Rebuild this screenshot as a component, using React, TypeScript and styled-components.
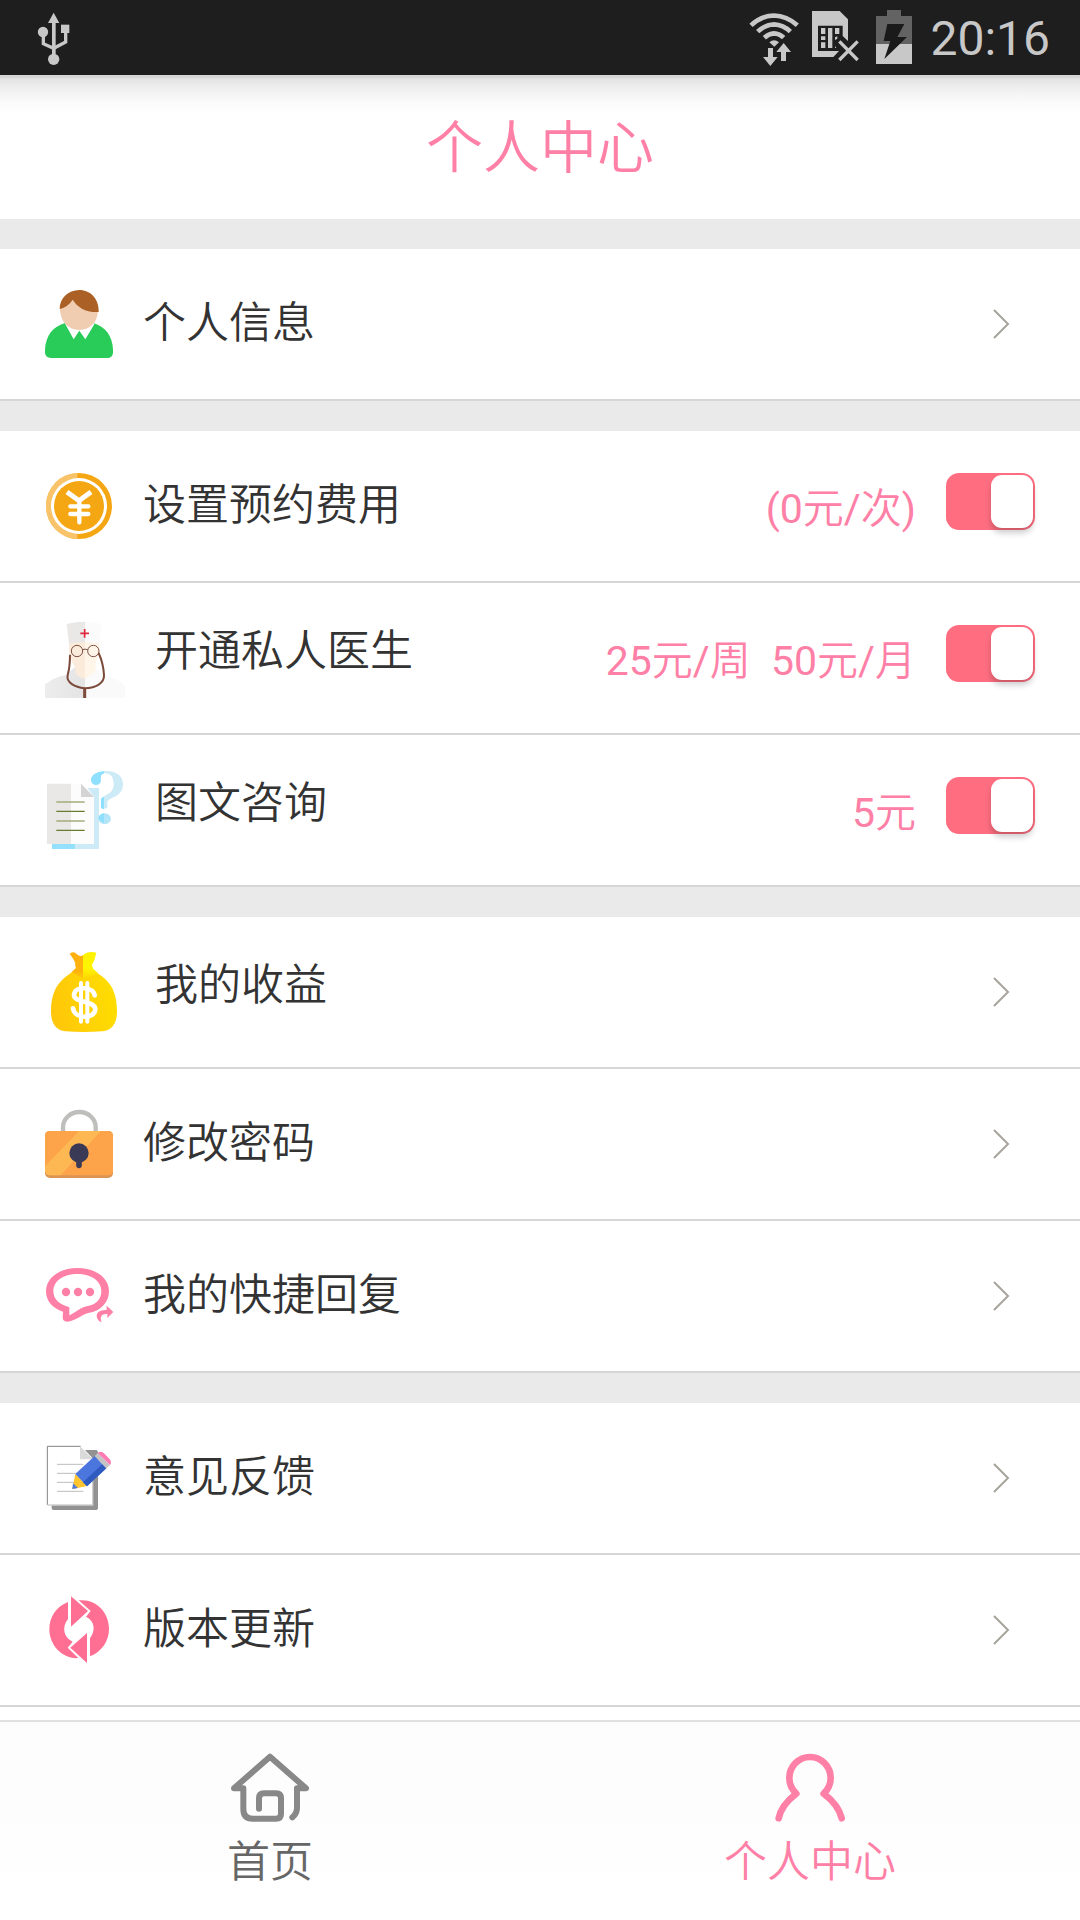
import React, { useState } from 'react';
import styled, { createGlobalStyle } from 'styled-components';

const PINK = '#ff80a6';
const LINE = '#d6d6d6';

const GlobalStyle = createGlobalStyle`
  *, *::before, *::after { box-sizing: border-box; }
  body {
    margin: 0;
    background: #ffffff;
    color: #333333;
    font-family: Roboto, "Noto Sans CJK SC DemiLight", "Noto Sans CJK SC", sans-serif;
    font-weight: 400;
  }
`;

const Page = styled.div`
  display: flex;
  flex-direction: column;
  min-height: 100vh;
`;

const StatusBar = styled.div`
  display: flex;
  align-items: center;
  gap: 12px;
  height: 75px;
  padding: 0 30px 0 37px;
  background: #1e1e1e;
  color: #c8c8c8;
`;

const Spacer = styled.div`
  flex: 1;
`;

const Clock = styled.time`
  padding: 2px 0 0 2px;
  font-size: 48px;
  line-height: 56px;
`;

const Glyph = styled.svg<{ $w: number; $h: number }>`
  display: block;
  flex: none;
  width: ${(p) => p.$w}px;
  height: ${(p) => p.$h}px;
  overflow: visible;
`;

const Header = styled.header`
  display: flex;
  align-items: center;
  justify-content: center;
  height: 144px;
  padding-top: 4px;
  background: linear-gradient(#d6d6d6 0 3px, #e2e2e2 3px, #f0f0f0 14px, #fafafa 27px, #ffffff 38px);
`;

const Title = styled.h1`
  margin: 0;
  font-size: 57px;
  line-height: 80px;
  font-weight: 400;
  color: ${PINK};
`;

const Main = styled.main`
  flex: 1;
  padding-bottom: 13px;
`;

const Group = styled.section`
  border-top: 30px solid #eaeaea;
`;

const Row = styled.div`
  display: flex;
  align-items: center;
  gap: 30px;
  height: 152px;
  padding: 0 45px;
  border-bottom: 2px solid ${LINE};
`;

const LinkRow = styled(Row).attrs({ as: 'a' })<{ href: string }>`
  color: inherit;
  text-decoration: none;
`;

const Caption = styled.div`
  display: flex;
  flex: 1;
  align-items: flex-start;
  gap: 30px;
`;

const Label = styled.span`
  font-size: 43px;
  line-height: 66px;
`;

const Price = styled.span`
  padding-top: 6px;
  font-size: 41px;
  line-height: 56px;
  color: ${PINK};
  white-space: pre;
`;

const SwitchSlot = styled.span`
  display: flex;
  padding-bottom: 9px;
`;

const Switch = styled.input`
  appearance: none;
  display: flex;
  justify-content: flex-start;
  width: 89px;
  height: 57px;
  margin: 0;
  padding: 2px;
  border-radius: 13px;
  background: #d0d0d0;
  cursor: pointer;

  &::before {
    content: '';
    width: 42px;
    height: 53px;
    border-radius: 11px;
    background: #ffffff;
    box-shadow: 0 5px 6px rgba(0, 0, 0, 0.2);
  }

  &:checked {
    justify-content: flex-end;
    background: #ff6e80;
  }
`;

const TabBar = styled.nav`
  position: sticky;
  bottom: 0;
  display: flex;
  height: 200px;
  border-top: 2px solid #e0e0e0;
  background: linear-gradient(#fcfcfc, #ffffff);
`;

const Tab = styled.a<{ $active?: boolean }>`
  display: flex;
  flex: 1;
  flex-direction: column;
  align-items: center;
  gap: 7px;
  padding-top: 31px;
  color: ${(p) => (p.$active ? PINK : '#666666')};
  text-decoration: none;
`;

const UsbIcon = () => (
  <Glyph $w={34} $h={55} viewBox="111 30 102 165" aria-hidden="true">
    <g fill="#c8c8c8">
      <path d="M161 38 178 69H167V180H156V69H144Z" />
      <circle cx="129" cy="96" r="15.500" />
      <rect x="183" y="74" width="25" height="25" />
      <circle cx="161" cy="178" r="17" />
    </g>
    <path d="M130 100V131L161 145L197 126V92" fill="none" stroke="#c8c8c8" strokeWidth="10" />
  </Glyph>
);

const WifiIcon = () => (
  <Glyph $w={51} $h={55} viewBox="87 30 153 165" aria-hidden="true">
    <g fill="none" stroke="#c8c8c8" strokeWidth="14">
      <path d="M93 76Q124 47 162 46.500Q200 47 232 76" />
      <path d="M113 95Q135 74 162 73Q190 74 211 95" />
      <path d="M133 113Q146 101 162 100Q179 101 191 113" />
    </g>
    <g fill="#c8c8c8">
      <path d="M148 127Q162 115 177 127L163 140Z" />
      <path d="M144 144H159V171H173L151 198L129 171H144Z" />
      <path d="M191 129 213 156H198V183H183V156H169Z" />
    </g>
  </Glyph>
);

const SimIcon = () => (
  <Glyph $w={52} $h={55} viewBox="276 30 156 165" aria-hidden="true">
    <path d="M276 33H359L384 58V123L368 108V77H294V153H357L340 171H276Z" fill="#c8c8c8" />
    <g fill="#c8c8c8">
      <path d="M303 84H316V102H303ZM303 109H316V120H303ZM303 127H316V144H303Z" />
      <path d="M324 84H337V144H324ZM345 84H358V102H345Z" />
      <path d="M345 112L352 109V116L345 120ZM345 138L349 144H345Z" />
    </g>
    <path d="M358 124 413 180M413 124 358 180" stroke="#c8c8c8" strokeWidth="10" />
  </Glyph>
);

const BatteryIcon = () => (
  <Glyph $w={40} $h={55} viewBox="468 30 120 165" aria-hidden="true">
    <path d="M501 30H543V48H576V132H468V48H501Z" fill="#636363" />
    <path d="M468 132H576V192H468Z" fill="#c8c8c8" />
    <path d="M502 72H553L532 111H561L493 177L511 123H491Z" fill="#1a1a1a" />
  </Glyph>
);

const PersonIcon = () => (
  <Glyph $w={68} $h={68} viewBox="135 870 204 204" aria-hidden="true">
    <path d="M195 969Q138 987 135 1049V1058Q136 1072 153 1074H322Q338 1073 339 1058V1049Q336 987 280 969Z" fill="#29cb59" />
    <path d="M194 969Q237 1000 280 969L283 973L256 1018L238 992L221 1018Z" fill="#ffffff" />
    <path d="M180 925C180 965 205 990 238 990S294 965 294 930L270 890H215Z" fill="#f0cdb0" />
    <path d="M179 927C179 895 204 870 238 870C272 870 298 898 296 936C258 938 232 922 218 899Q204 921 179 927Z" fill="#ab6125" />
  </Glyph>
);

const CoinIcon = () => (
  <Glyph $w={68} $h={68} viewBox="135 126 204 204" aria-hidden="true">
    <circle cx="237" cy="228" r="99" fill="#f5a713" />
    <path d="M232 129A94 99 0 0 0 232 327Z" fill="#f9c469" />
    <circle cx="237" cy="228" r="84" fill="#ffffff" />
    <circle cx="237" cy="228" r="75" fill="#f5a713" />
    <path d="M201 186 237 212 273 186" fill="none" stroke="#ffffff" strokeWidth="15" />
    <path d="M211 229H265M211 252H265M238 214V277" fill="none" stroke="#ffffff" strokeWidth="13" strokeLinecap="round" />
  </Glyph>
);

const DoctorIcon = () => (
  <Glyph $w={80} $h={80} viewBox="135 564 240 240" aria-hidden="true">
    <defs>
      <linearGradient id="coatLeft" x1="0" x2="1">
        <stop offset="0" stopColor="#ededed" />
        <stop offset="1" stopColor="#e4e4e4" />
      </linearGradient>
    </defs>
    <path d="M135 763Q160 742 200 734L228 708L255 745V804H135Z" fill="url(#coatLeft)" />
    <path d="M255 745L284 712L312 736Q350 744 375 767V804H255Z" fill="#fafafa" />
    <path d="M207 636H255V747Q236 743 226 728V713Q212 692 207 660Z" fill="#fbebdb" />
    <path d="M255 636H299Q300 665 287 700Q290 724 278 733Q264 738 255 747Z" fill="#fff6e9" />
    <path d="M200 582Q225 575 255 575V636Q230 636 207 641Z" fill="#e9e8e7" />
    <path d="M255 575Q280 575 303 581L299 640Q275 636 255 636Z" fill="#fbfbfb" />
    <path d="M241 610H267M254 597V623" stroke="#e0283f" strokeWidth="5" />
    <g fill="none" stroke="#7c5144" strokeWidth="3">
      <circle cx="231" cy="663" r="17" />
      <circle cx="280" cy="663" r="17" />
      <path d="M248 659Q255 656 263 659" />
    </g>
    <path d="M210 674Q210 710 203 735C198 758 225 772 254 775C288 773 313 760 312 735Q310 700 296 669" fill="none" stroke="#7c4a3a" strokeWidth="6" />
    <path d="M254 776V804" stroke="#7c4a3a" strokeWidth="9" />
  </Glyph>
);

const ConsultIcon = () => (
  <Glyph $w={80} $h={80} viewBox="135 1020 240 240" aria-hidden="true">
    <path d="M262 1074H297V1257H225V1242H282V1100Z" fill="#cdebf6" />
    <path d="M156 1242H225V1257H156Z" fill="#95e0fd" />
    <path d="M141 1061H213V1242H141Z" fill="#e9e8e7" />
    <path d="M213 1061H243L282 1100V1242H213Z" fill="#fcfcfc" />
    <path d="M243 1061 282 1101H243Z" fill="#d4d4d4" />
    <path d="M169 1116H254M169 1173H254" stroke="#a3ad7c" strokeWidth="5" />
    <path d="M169 1144H254M169 1201H254" stroke="#687b30" strokeWidth="4" />
    <path d="M312 1023C350 1021 369 1038 369 1064C368 1102 327 1100 322 1116V1134Q312 1139 303 1134V1113C305 1090 340 1100 341 1062C341 1036 327 1029 312 1030Z" fill="#cdebf6" />
    <path d="M312 1023C288 1025 273 1036 273 1050C274 1069 300 1070 303 1053C302 1041 301 1033 312 1031ZM303 1106Q306 1102 312 1100V1137Q306 1137 303 1134Z" fill="#8ee0fe" />
    <ellipse cx="314" cy="1166" rx="19" ry="16" fill="#b4e4f7" />
    <path d="M312 1150A19 16 0 0 0 295 1166L312 1180Z" fill="#8ee0fe" />
  </Glyph>
);

const MoneyIcon = () => (
  <Glyph $w={80} $h={80} viewBox="135 156 240 240" aria-hidden="true">
    <defs>
      <linearGradient id="bagBody" x1="0" y1="0.6" x2="1" y2="0.4">
        <stop offset="0" stopColor="#ffc60a" />
        <stop offset="1" stopColor="#ffde00" />
      </linearGradient>
      <linearGradient id="bagLeft" x1="0" y1="0" x2="0" y2="1">
        <stop offset="0" stopColor="#ffb010" />
        <stop offset="0.7" stopColor="#ffb10d" />
        <stop offset="1" stopColor="#ffcb08" />
      </linearGradient>
      <linearGradient id="bagRight" x1="0" y1="0" x2="0" y2="1">
        <stop offset="0" stopColor="#fff200" />
        <stop offset="0.6" stopColor="#fff500" />
        <stop offset="1" stopColor="#ffd802" />
      </linearGradient>
    </defs>
    <path d="M226 206H278C294 228 350 236 351 330C352 370 336 391 308 394Q252 398 196 394C168 391 152 370 153 330C155 236 212 228 226 206Z" fill="url(#bagBody)" />
    <path d="M209 161Q222 152 230 162Q239 171 249 166V236L215 216L228 204L225 195Q230 189 209 161Z" fill="url(#bagLeft)" />
    <path d="M249 166Q264 152 289 158Q285 180 276 195L279 206L295 220L249 236Z" fill="url(#bagRight)" />
    <path d="M284 286C280 260 226 256 222 284C220 310 286 300 286 328C284 358 224 358 219 325" fill="none" stroke="#ffffff" strokeWidth="14" strokeLinecap="round" />
    <path d="M243 249V365M262 249V365" stroke="#ffffff" strokeWidth="12" strokeLinecap="round" />
  </Glyph>
);

const LockIcon = () => (
  <Glyph $w={68} $h={68} viewBox="135 630 204 204" aria-hidden="true">
    <path d="M189 696V682A49 46 0 0 1 287 682V696" fill="none" stroke="#bebebd" strokeWidth="13" />
    <rect x="135" y="693" width="204" height="141" rx="15" fill="#db9452" />
    <rect x="135" y="693" width="204" height="133" rx="13" fill="#fda349" />
    <path d="M237 693H303L182 826H148Q135 824 135 810V799Z" fill="#fdb853" />
    <circle cx="237" cy="759" r="29" fill="#3b3a56" />
    <path d="M237 770V796" stroke="#3b3a56" strokeWidth="17" strokeLinecap="round" />
  </Glyph>
);

const ReplyIcon = () => (
  <Glyph $w={68} $h={68} viewBox="135 1086 204 204" aria-hidden="true">
    <path
      fillRule="evenodd"
      fill={PINK}
      d="M232 1104C286 1104 327 1133 327 1173C327 1207 302 1234 265 1239C246 1243 229 1262 203 1265Q188 1266 188 1252L189 1235C157 1225 138 1202 138 1174C138 1134 178 1104 232 1104ZM232 1122C190 1122 160 1143 160 1174C160 1200 180 1213 208 1222V1246C226 1238 238 1224 260 1219C288 1214 304 1198 304 1173C304 1143 274 1122 232 1122Z"
    />
    <g fill={PINK}>
      <circle cx="198" cy="1176" r="12.500" />
      <circle cx="234" cy="1176" r="12.500" />
      <circle cx="270" cy="1176" r="12.500" />
      <path d="M320 1217 340 1236 322 1254V1242C306 1240 298 1250 305 1267C290 1261 285 1244 296 1235Q305 1229 320 1230Z" />
    </g>
  </Glyph>
);

const FeedbackIcon = () => (
  <Glyph $w={68} $h={68} viewBox="135 192 204 204" aria-hidden="true">
    <path d="M255 210H290L294 216V386L290 390H159L155 386V374H279V236Z" fill="#929292" />
    <path d="M142 199H242L278 236V375H142Z" fill="#ffffff" />
    <path d="M142 375V199H242" fill="none" stroke="#828282" strokeWidth="3" />
    <path d="M142 375H278V236" fill="none" stroke="#d0d0d0" strokeWidth="4" />
    <path d="M240 199 279 238H240Z" fill="#dadada" />
    <path d="M171 253H250M171 280H250M171 307H250M171 334H250" stroke="#bdbdbd" strokeWidth="3" />
    <path d="M226 282 261 318 217 327Z" fill="#ffc42e" />
    <path d="M219 310 234 324 217 327Z" fill="#4f79dc" />
    <path d="M284 228 319 265 261 319 226 282Z" fill="#4a76de" />
    <path d="M307 253 319 265 261 319 249 307Z" fill="#2f5ac0" />
    <path d="M284 228 293 219 330 255 319 265Z" fill="#c4c4c6" />
    <path d="M293 219Q303 211 312 220L328 236Q337 246 330 255Z" fill="#ff7bb4" />
  </Glyph>
);

const UpdateIcon = () => (
  <Glyph $w={68} $h={68} viewBox="135 648 204 204" aria-hidden="true">
    <g fill="#ff6e93">
      <path d="M213 649 264 693 213 740Z" />
      <path d="M236 661C288 655 327 697 327 746C327 784 304 816 270 829V775C288 750 284 722 258 710L272 693Z" />
      <path d="M204 666C170 679 148 710 148 748C148 799 192 839 235 834L203 803L218 785C190 773 185 740 204 717Z" />
      <path d="M261 849V759L211 803Z" />
    </g>
  </Glyph>
);

const Chevron = () => (
  <Glyph $w={68} $h={68} viewBox="0 0 68 68" aria-hidden="true">
    <path d="M27 20 41 34 27 48" fill="none" stroke="#a6a49c" strokeWidth="2" />
  </Glyph>
);

const HomeIcon = () => (
  <Glyph $w={80} $h={69} viewBox="150 190 240 207" aria-hidden="true">
    <path
      d="M237 357V326Q237 311 252 311H288Q303 311 303 326V372Q303 387 288 387H218Q190 387 190 358V296H162L270 201L378 296H351V355Q351 372 337 383"
      fill="none"
      stroke="#888888"
      strokeWidth="18"
      strokeLinecap="round"
      strokeLinejoin="round"
    />
  </Glyph>
);

const ProfileIcon = () => (
  <Glyph $w={80} $h={69} viewBox="210 190 240 207" aria-hidden="true">
    <path
      d="M236 386Q244 346 289 312Q268 292 268 265A62 63 0 0 1 392 265Q392 292 371 312Q416 346 425 386"
      fill="none"
      stroke={PINK}
      strokeWidth="20"
      strokeLinecap="round"
      strokeLinejoin="round"
    />
  </Glyph>
);

interface LinkItemProps {
  icon: React.ReactNode;
  label: string;
  href: string;
}

const LinkItem = ({ icon, label, href }: LinkItemProps) => (
  <LinkRow href={href}>
    <Caption>
      {icon}
      <Label>{label}</Label>
    </Caption>
    <Chevron />
  </LinkRow>
);

interface SwitchItemProps {
  id: string;
  icon: React.ReactNode;
  label: string;
  price: string;
}

const SwitchItem = ({ id, icon, label, price }: SwitchItemProps) => {
  const [on, setOn] = useState(true);
  return (
    <Row>
      <Caption>
        {icon}
        <Label as="label" htmlFor={id}>{label}</Label>
      </Caption>
      <Price>{price}</Price>
      <SwitchSlot>
        <Switch id={id} type="checkbox" checked={on} onChange={(e) => setOn(e.target.checked)} />
      </SwitchSlot>
    </Row>
  );
};

export default function App() {
  return (
    <Page>
      <GlobalStyle />
      <StatusBar>
        <UsbIcon />
        <Spacer />
        <WifiIcon />
        <SimIcon />
        <BatteryIcon />
        <Clock>20:16</Clock>
      </StatusBar>
      <Header>
        <Title>个人中心</Title>
      </Header>
      <Main>
        <Group>
          <LinkItem href="#profile" icon={<PersonIcon />} label="个人信息" />
        </Group>
        <Group>
          <SwitchItem id="booking" icon={<CoinIcon />} label="设置预约费用" price="(0元/次)" />
          <SwitchItem id="doctor" icon={<DoctorIcon />} label="开通私人医生" price="25元/周  50元/月" />
          <SwitchItem id="consult" icon={<ConsultIcon />} label="图文咨询" price="5元" />
        </Group>
        <Group>
          <LinkItem href="#income" icon={<MoneyIcon />} label="我的收益" />
          <LinkItem href="#password" icon={<LockIcon />} label="修改密码" />
          <LinkItem href="#replies" icon={<ReplyIcon />} label="我的快捷回复" />
        </Group>
        <Group>
          <LinkItem href="#feedback" icon={<FeedbackIcon />} label="意见反馈" />
          <LinkItem href="#update" icon={<UpdateIcon />} label="版本更新" />
        </Group>
      </Main>
      <TabBar>
        <Tab href="#home">
          <HomeIcon />
          <Label>首页</Label>
        </Tab>
        <Tab href="#me" $active aria-current="page">
          <ProfileIcon />
          <Label>个人中心</Label>
        </Tab>
      </TabBar>
    </Page>
  );
}
